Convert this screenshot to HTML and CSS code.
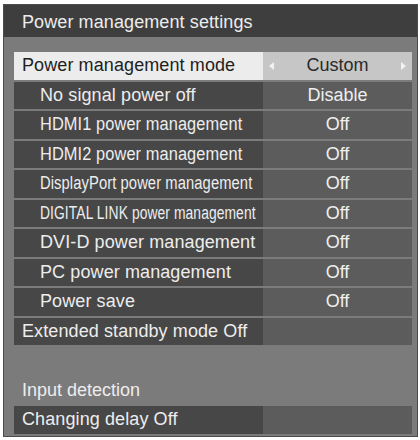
FILE: index.html
```html
<!DOCTYPE html>
<html>
<head>
<meta charset="utf-8">
<link rel="stylesheet" href="styles.css">
</head>
<body>
<div class="panel">
  <div class="title">Power management settings</div>
  <div class="list">
    <div class="row selected">
      <div class="label">Power management mode</div>
      <div class="value">
        <span class="arrow left"></span>
        <span>Custom</span>
        <span class="arrow right"></span>
      </div>
    </div>
    <div class="row">
      <div class="label sub">No signal power off</div>
      <div class="value">Disable</div>
    </div>
    <div class="row">
      <div class="label sub"><span class="narrow n0">HDMI1 power management</span></div>
      <div class="value">Off</div>
    </div>
    <div class="row">
      <div class="label sub"><span class="narrow n0">HDMI2 power management</span></div>
      <div class="value">Off</div>
    </div>
    <div class="row">
      <div class="label sub"><span class="narrow n1">DisplayPort power management</span></div>
      <div class="value">Off</div>
    </div>
    <div class="row">
      <div class="label sub"><span class="narrow n2">DIGITAL LINK power management</span></div>
      <div class="value">Off</div>
    </div>
    <div class="row">
      <div class="label sub">DVI-D power management</div>
      <div class="value">Off</div>
    </div>
    <div class="row">
      <div class="label sub">PC power management</div>
      <div class="value">Off</div>
    </div>
    <div class="row">
      <div class="label sub">Power save</div>
      <div class="value">Off</div>
    </div>
    <div class="row">
      <div class="label">Extended standby mode Off</div>
      <div class="value"></div>
    </div>
    <div class="spacer"></div>
    <div class="heading">Input detection</div>
    <div class="row">
      <div class="label">Changing delay Off</div>
      <div class="value"></div>
    </div>
  </div>
</div>
</body>
</html>
```

FILE: styles.css
```css
html, body {
  margin: 0;
  padding: 0;
  background: #ffffff;
}
body {
  font-family: "Liberation Sans", Arial, sans-serif;
  width: 420px;
  height: 440px;
  overflow: hidden;
}
.panel {
  margin: 4px 2px 0 3px;
  width: 415px;
  height: 433px;
  box-sizing: border-box;
  border: 1px solid #4c4c4c;
  background: #7b7b7b;
  display: flex;
  flex-direction: column;
}
.title {
  height: 32px;
  box-sizing: border-box;
  padding: 3px 0 0 18px;
  background: #3e3e3e;
  color: #ececec;
  font-size: 18px;
  line-height: 28px;
  letter-spacing: 0.1px;
}
.list {
  display: flex;
  flex-direction: column;
  gap: 2px;
  padding: 15px 5px 0 10px;
}
.row {
  display: grid;
  grid-template-columns: 249px 1fr;
  height: 27.5px;
}
.label {
  background: #474747;
  color: #ededed;
  font-size: 18px;
  line-height: 27.5px;
  padding-left: 8px;
  white-space: nowrap;
  overflow: hidden;
  letter-spacing: 0.1px;
}
.label.sub {
  padding-left: 26px;
}
.value {
  background: #5c5c5c;
  color: #efefef;
  font-size: 18px;
  line-height: 27.5px;
  text-align: center;
  position: relative;
}
.selected .label {
  background: #ececec;
  color: #1e1e1e;
}
.selected .value {
  background: #c6c6c6;
  color: #2a2a2a;
}
.arrow {
  position: absolute;
  top: 10px;
  width: 0;
  height: 0;
  border-top: 4px solid transparent;
  border-bottom: 4px solid transparent;
}
.arrow.left {
  left: 6px;
  border-right: 5px solid #f2f2f2;
}
.arrow.right {
  right: 6px;
  border-left: 5px solid #f2f2f2;
}
.narrow {
  display: inline-block;
  transform-origin: left center;
}
.n0 {
  transform: scaleX(0.91);
}
.n1 {
  transform: scaleX(0.82);
}
.n2 {
  transform: scaleX(0.77);
}
.spacer {
  height: 27.5px;
}
.heading {
  height: 27.5px;
  color: #ededed;
  font-size: 18px;
  line-height: 27.5px;
  padding-left: 8px;
}
```
